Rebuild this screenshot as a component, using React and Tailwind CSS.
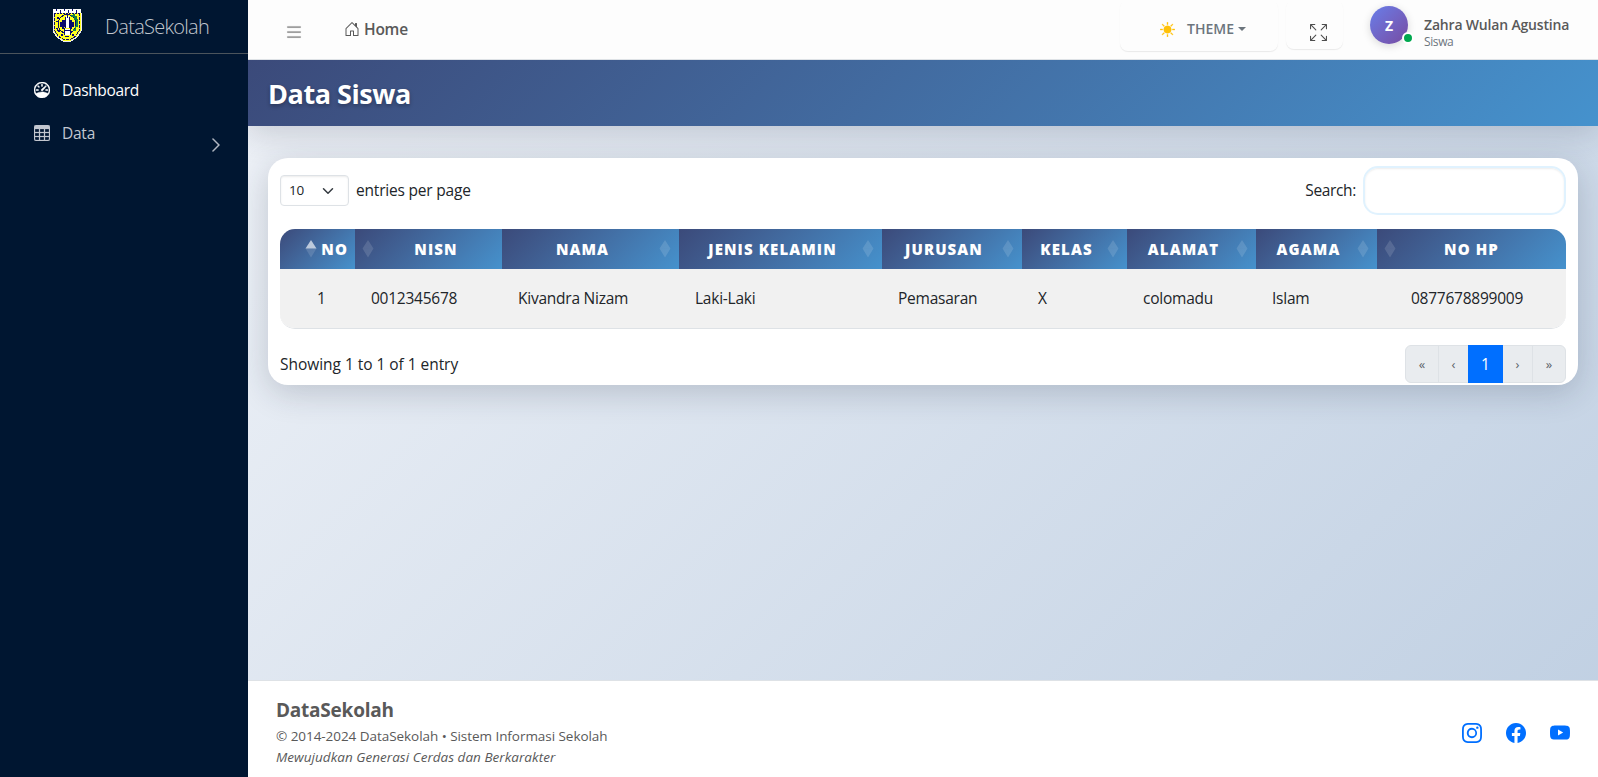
import React from "react";
import {
  BsSpeedometer, BsTable, BsChevronRight, BsList, BsHouseDoor, BsSunFill,
  BsArrowsFullscreen, BsInstagram, BsFacebook, BsYoutube,
} from "react-icons/bs";

function Logo() {
  return (
    <svg width="30" height="34" viewBox="0 0 30 34" shapeRendering="crispEdges">
      <path d="M1 4H29V23L25 29L19 33H11L5 29L1 23Z" fill="#ffff1f" />
      <path d="M1 5V23L5 29L11 33H19L25 29L29 23V5" fill="none" stroke="#e8e8f4" strokeWidth="1" />
      <path d="M2.500 6V22L6 28L11.500 31.500H18.500L24 28L27.500 22V6" fill="none" stroke="#0b0b6b" strokeWidth="1" strokeDasharray="3 1" />
      <path d="M1 1H29V5H1Z" fill="#fff" />
      <path d="M4.500 1v2M8.500 2v3M12.500 1v2M16.500 2v3M20.500 1v2M24.500 2v3" stroke="#0b0b6b" strokeWidth="1" />
      <path d="M2 5.500H28" stroke="#0b0b6b" strokeWidth="1" strokeDasharray="2 1" />
      <ellipse cx="15" cy="16" rx="9" ry="9.500" fill="none" stroke="#0b0b6b" strokeWidth="1" />
      <path d="M21 6h2v2h2v3h1v8h-2v4h-3v-2h2v-3h1v-6h-2v-3h-3v-2h2z" fill="#12804a" />
      <path d="M10 12h3v7h-1v2h-2v-2h-2v-5h2zM18 12h2v2h2v5h-2v2h-2z" fill="#0b0b6b" />
      <path d="M5 9h2v2H5zM4 13h2v1H4zM4 20h2v2h2v2H6zM9 26h2v2H9zM20 26h2v2h-2zM13 28h4v1h-4z" fill="#0b0b6b" />
      <path d="M14 8h3v12h-3zM12 21h7v6h-7z" fill="#fff" />
      <path d="M13.500 9v11M17.500 9v11M15.500 6v4M12 22.500h7M12.500 20v7M18.500 20v7" stroke="#0b0b6b" strokeWidth="1" />
    </svg>
  );
}

function Sidebar() {
  return (
    <aside className="relative z-20 flex w-[248px] shrink-0 flex-col bg-[#001631]">
      <div className="flex h-[54px] items-center border-b border-[#4b545c] pl-[52px]">
        <span className="-mt-1 block"><Logo /></span>
        <span className="mt-px ml-[23px] text-[20px] font-light tracking-[-0.75px] text-[#c2c7ce]">DataSekolah</span>
      </div>
      <nav className="flex flex-col pt-4 pl-[34px]">
        <a className="flex h-10 items-center gap-3 text-white">
          <BsSpeedometer size={16} className="stroke-current stroke-[0.5]" />
          <span className="mt-0.5 text-[15.500px] tracking-[-0.35px]">Dashboard</span>
        </a>
        <a className="mt-[3px] flex h-10 items-center text-[#c2c7d0]">
          <BsTable size={16} className="stroke-current stroke-[0.25]" />
          <span className="mt-0.5 ml-3 text-[15.500px] tracking-[-0.25px]">Data</span>
          <BsChevronRight size={16} className="mt-6 mr-6 ml-auto stroke-current stroke-[0.5]" />
        </a>
      </nav>
    </aside>
  );
}

function Navbar() {
  return (
    <header className="relative z-10 flex h-[60px] shrink-0 border-b border-[#dee2e6] bg-[#fdfdfd]">
      <BsList size={20} className="mt-[22px] ml-9 stroke-current stroke-[0.25] text-[#8a8a8a]" />
      <div className="mt-[17px] ml-10 flex h-6 items-center text-[#595959]">
        <BsHouseDoor size={16} />
        <span className="mt-0.5 ml-1 text-[15.500px] font-semibold tracking-[-0.25px]">Home</span>
      </div>
      <div className="ml-auto flex">
        <div className="flex h-[51px] w-[158px] rounded-[8px] pt-[7px] pl-10 shadow-[0_1px_1px_rgba(0,0,0,0.08)]">
          <div className="flex h-11 items-center text-[#6c757d]">
            <BsSunFill size={15} className="stroke-current stroke-[0.4] text-[#ffc107]" />
            <span className="-mt-px ml-3 text-[14px] font-semibold">THEME</span>
            <span className="ml-1 border-x-4 border-t-4 border-x-transparent border-t-[#6c757d]" />
          </div>
        </div>
        <div className="ml-2 flex h-[49px] w-[57px] rounded-[8px] pt-[24px] pl-[24px] text-[#4d4d4d] shadow-[0_1px_1px_rgba(0,0,0,0.08)]">
          <BsArrowsFullscreen size={17} />
        </div>
        <div className="relative mt-[6px] ml-[27px] flex size-[38px] items-center justify-center rounded-full bg-linear-135 from-[#667eea] to-[#764ba2] text-[14px] font-bold text-white shadow-[0_2px_8px_rgba(0,0,0,0.15)]">
          Z
          <span className="absolute top-[26px] left-[32px] size-3 rounded-full border-2 border-white bg-[#00a84f]" />
        </div>
        <div className="mt-[15px] ml-4 w-[174px]">
          <div className="text-[14px] leading-[19px] font-semibold tracking-[-0.18px] whitespace-nowrap text-[#595959]">Zahra Wulan Agustina</div>
          <div className="text-[12px] leading-[16px] tracking-[-0.4px] text-[#6c757d]">Siswa</div>
        </div>
      </div>
    </header>
  );
}

function Sorter({ active = false }) {
  return (
    <svg width="12" height="20" viewBox="0 0 12 20" fill="#fff" className="shrink-0">
      <path d="M.5 9.500L6 1L11.500 9.500Z" opacity={active ? 0.65 : 0.135} />
      <path d="M.5 9.500L6 18.500L11.500 9.500Z" opacity="0.135" />
    </svg>
  );
}

const columns = [
  { label: "NO", value: "1", w: "w-[75px]", head: "pr-[7px]", cell: "pl-[37px]", sort: "left", active: true },
  { label: "NISN", value: "0012345678", w: "w-[147px]", head: "pl-[7px] pr-1", cell: "pl-4", sort: "far" },
  { label: "NAMA", value: "Kivandra Nizam", w: "w-[177px]", head: "pl-1 pr-2", cell: "pl-4", sort: "right" },
  { label: "JENIS KELAMIN", value: "Laki-Laki", w: "w-[203px]", head: "pl-1 pr-2", cell: "pl-4", sort: "right" },
  { label: "JURUSAN", value: "Pemasaran", w: "w-[140px]", head: "pl-1 pr-2", cell: "pl-4", sort: "right" },
  { label: "KELAS", value: "X", w: "w-[105px]", head: "pl-1 pr-2", cell: "pl-4", sort: "right" },
  { label: "ALAMAT", value: "colomadu", w: "w-[129px]", head: "pl-1 pr-2", cell: "pl-4", sort: "right" },
  { label: "AGAMA", value: "Islam", w: "w-[121px]", head: "pl-1 pr-2", cell: "pl-4", sort: "right" },
  { label: "NO HP", value: "0877678899009", w: "w-[189px]", head: "pl-[7px] pr-[19px]", cell: "pl-[34px]", sort: "far" },
];

function Table() {
  return (
    <div className="mt-[14px] overflow-hidden rounded-[15px] border-b border-[#dee2e6]">
      <div className="flex h-10">
        {columns.map((c) => (
          <div key={c.label} className={`${c.w} ${c.head} flex items-center bg-linear-135 from-[#3b4a7a] to-[#4592cd] text-[15px] font-extrabold tracking-[1.100px] whitespace-nowrap text-white ${c.sort === "left" ? "justify-end gap-1" : ""}`}>
            {c.sort !== "right" && <Sorter active={c.active} />}
            {c.sort === "left" ? <span>{c.label}</span> : <span className="flex-1 text-center">{c.label}</span>}
            {c.sort === "right" && <Sorter />}
          </div>
        ))}
      </div>
      <div className="flex h-[59px] bg-[#f1f1f1]">
        {columns.map((c) => (
          <div key={c.label} className={`${c.w} ${c.cell} flex items-center pt-px text-[15.500px] tracking-[-0.24px] whitespace-nowrap`}>{c.value}</div>
        ))}
      </div>
    </div>
  );
}

function Pagination() {
  return (
    <div className="flex h-[38px] w-[161px] items-center rounded-[6px] border border-[#dee2e6] bg-[#e9ecef] text-center text-[13px] text-[#5c636a]">
      <span className="mt-0.5 w-[32px]">«</span>
      <span className="flex h-full w-[30px] items-center justify-center border-l border-[#dee2e6] pt-0.5">‹</span>
      <span className="flex h-[38px] w-[35px] items-center justify-center bg-[#006fff] pt-0.5 text-[15.500px] text-white">1</span>
      <span className="mt-0.5 w-[29px]">›</span>
      <span className="flex h-full w-[33px] items-center justify-center border-l border-[#dee2e6] pt-0.5">»</span>
    </div>
  );
}

export default function App() {
  return (
    <div className="flex h-[777px] w-[1598px] overflow-hidden font-['Open_Sans',sans-serif] text-[#212529]">
      <Sidebar />
      <div className="flex w-[1350px] flex-col bg-linear-135 from-[#f0f3f8] to-[#bfcfe2]">
        <Navbar />
        <div className="flex h-[66px] shrink-0 items-center bg-linear-135 from-[#3b4a7a] to-[#4592cd] pl-5 shadow-[0_8px_32px_rgba(31,38,60,0.18)]">
          <h1 className="mt-[2px] text-[27px] font-bold tracking-[-0.45px] text-white [text-shadow:0_2px_4px_rgba(0,0,0,0.3)]">Data Siswa</h1>
        </div>
        <main className="flex-1 px-5 pt-8">
          <section className="h-[227px] rounded-[20px] bg-white px-3 pt-2 shadow-[0_8px_32px_rgba(31,38,60,0.2)]">
            <div className="flex h-[49px] items-center text-[15.500px] tracking-[-0.2px]">
              <div className="flex h-[31px] w-[69px] items-center justify-between rounded-[4px] border border-[#dee2e6] pr-[14px] pl-2 text-[13.500px] shadow-[inset_0_1px_2px_rgba(0,0,0,0.075)]">
                10
                <svg width="12" height="12" viewBox="0 0 16 16" fill="none" stroke="#343a40" strokeWidth="2" strokeLinecap="round" strokeLinejoin="round"><path d="m2 5 6 6 6-6" /></svg>
              </div>
              <span className="ml-[7px]">entries per page</span>
              <span className="ml-auto tracking-[-0.35px]">Search:</span>
              <input aria-label="Search" className="ml-[7px] h-[49px] w-[203px] rounded-[15px] border-2 border-[#e0f2fe] bg-white shadow-[inset_0_1px_2px_rgba(0,0,0,0.075)] outline-none" />
            </div>
            <Table />
            <div className="mt-4 flex h-[38px] items-center justify-between">
              <span className="mt-0.5 text-[15.500px] tracking-[-0.040px]">Showing 1 to 1 of 1 entry</span>
              <Pagination />
            </div>
          </section>
        </main>
        <footer className="flex h-[97px] shrink-0 items-start justify-between border-t border-[#dee2e6] bg-white pr-7 pl-7 text-[#595959]">
          <div className="pt-[17px]">
            <div className="text-[19px] leading-[24px] font-bold tracking-[-0.23px]">DataSekolah</div>
            <div className="mt-1 text-[13.500px] leading-[21px] tracking-[-0.050px]">© 2014-2024 DataSekolah • Sistem Informasi Sekolah</div>
            <div className="text-[13.500px] leading-[21px] tracking-[0.030px] italic">Mewujudkan Generasi Cerdas dan Berkarakter</div>
          </div>
          <div className="flex gap-6 pt-[42px] text-[#006fff]">
            <BsInstagram size={20} />
            <BsFacebook size={20} />
            <BsYoutube size={20} />
          </div>
        </footer>
      </div>
    </div>
  );
}
